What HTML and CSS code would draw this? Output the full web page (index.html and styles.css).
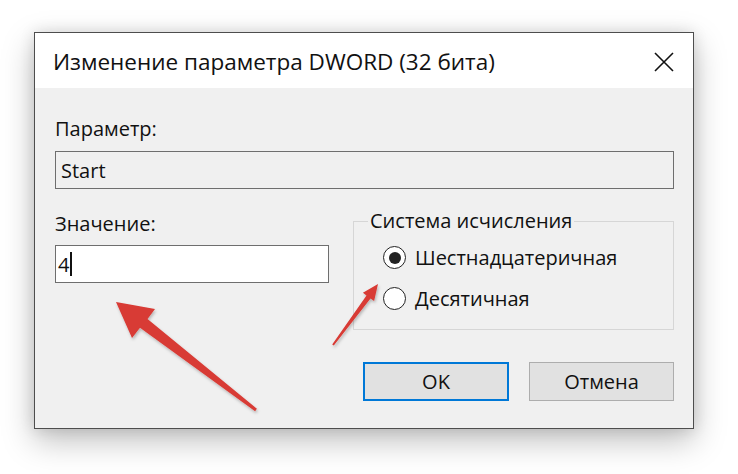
FILE: index.html
```html
<!DOCTYPE html>
<html lang="ru">
<head>
<meta charset="utf-8">
<title>Изменение параметра DWORD (32 бита)</title>
<link rel="stylesheet" href="styles.css">
</head>
<body>
<div class="stage">
  <div class="dialog">
    <div class="titlebar">
      <span class="title">Изменение параметра DWORD (32 бита)</span>
      <svg class="close" width="20" height="20" viewBox="0 0 20 20"><path d="M1 1 L19 19 M19 1 L1 19" stroke="#111" stroke-width="1.6" fill="none"/></svg>
    </div>
    <div class="content">
      <div class="label">Параметр:</div>
      <div class="field disabled">Start</div>
      <div class="lower">
        <div class="valuecol">
          <div class="label">Значение:</div>
          <div class="field value">4<span class="caret"></span></div>
        </div>
        <fieldset class="group">
          <legend>Система исчисления</legend>
          <div class="radio"><span class="circle checked"></span><span>Шестнадцатеричная</span></div>
          <div class="radio"><span class="circle"></span><span>Десятичная</span></div>
        </fieldset>
      </div>
      <div class="buttons">
        <div class="btn primary">OK</div>
        <div class="btn">Отмена</div>
      </div>
    </div>
  </div>
  <svg class="arrows" width="738" height="474" viewBox="0 0 738 474">
    <defs>
      <filter id="sh" x="-20%" y="-20%" width="140%" height="140%">
        <feDropShadow dx="1" dy="2" stdDeviation="1.5" flood-color="#000" flood-opacity="0.25"/>
      </filter>
    </defs>
    <polygon filter="url(#sh)" fill="#d83a34" points="116,302 155,309 147.5,319 256.9,408.8 255.1,411.2 140,327.8 132,338"/>
    <polygon filter="url(#sh)" fill="#d83a34" points="378,284 374.1,301.1 370.5,298.4 333.8,345.6 332.2,344.4 366.5,295.4 362.9,292.7"/>
  </svg>
</div>
</body>
</html>
```

FILE: styles.css
```css
html, body {
  margin: 0;
  padding: 0;
  background: #ffffff;
}
body {
  width: 738px;
  height: 474px;
  overflow: hidden;
  font-family: "Open Sans", "Noto Sans", "DejaVu Sans", sans-serif;
  color: #111;
}
.stage {
  position: relative;
  width: 738px;
  height: 474px;
  padding: 32px 0 0 34px;
  box-sizing: border-box;
}
.dialog {
  width: 660px;
  height: 397px;
  box-sizing: border-box;
  border: 1px solid #4d4d4d;
  background: #f0f0f0;
  box-shadow: 0 12px 30px rgba(0,0,0,0.25), 0 0 14px rgba(0,0,0,0.12);
  display: flex;
  flex-direction: column;
}
.titlebar {
  height: 55px;
  box-sizing: border-box;
  background: #fff;
  display: flex;
  align-items: center;
  justify-content: space-between;
  padding: 2px 19px 0 18px;
}
.title {
  font-size: 22.5px;
  letter-spacing: 0;
}
.close {
  display: block;
}
.content {
  flex: 1;
  display: flex;
  flex-direction: column;
  padding: 29px 19px 0 20px;
  font-size: 20px;
}
.label {
  line-height: 24px;
  height: 24px;
}
.field {
  height: 38px;
  box-sizing: border-box;
  border: 1.5px solid #6e6e6e;
  display: flex;
  align-items: center;
  padding-left: 5px;
  margin-top: 10px;
}
.field.disabled {
  background: #f0f0f0;
}
.field.value {
  background: #fff;
  margin-top: 9px;
  padding-left: 2px;
}
.caret {
  display: inline-block;
  width: 1.5px;
  height: 24px;
  background: #111;
  margin-left: 1px;
}
.lower {
  display: flex;
  gap: 24px;
  margin-top: 20px;
}
.valuecol {
  width: 274px;
  padding-top: 3px;
}
.group {
  width: 321px;
  height: 121px;
  box-sizing: border-box;
  margin: 0;
  border: 1px solid #d6d6d6;
  padding: 4px 0 0 29px;
}
.group legend {
  padding: 0 2px;
  margin-left: -15px;
  line-height: 24px;
}
.radio {
  display: flex;
  align-items: center;
  gap: 9px;
  height: 41px;
}
.circle {
  width: 23px;
  height: 23px;
  box-sizing: border-box;
  border: 1.5px solid #222;
  border-radius: 50%;
  background: #fff;
  display: flex;
  align-items: center;
  justify-content: center;
}
.circle.checked::after {
  content: "";
  width: 12px;
  height: 12px;
  border-radius: 50%;
  background: #222;
}
.buttons {
  display: flex;
  justify-content: flex-end;
  gap: 20px;
  margin-top: 32px;
}
.btn {
  width: 145px;
  height: 39px;
  box-sizing: border-box;
  border: 1px solid #adadad;
  background: #e1e1e1;
  display: flex;
  align-items: center;
  justify-content: center;
}
.btn.primary {
  width: 146px;
  border: 2px solid #0078d7;
}
.arrows {
  position: absolute;
  left: 0;
  top: 0;
  pointer-events: none;
}
```
